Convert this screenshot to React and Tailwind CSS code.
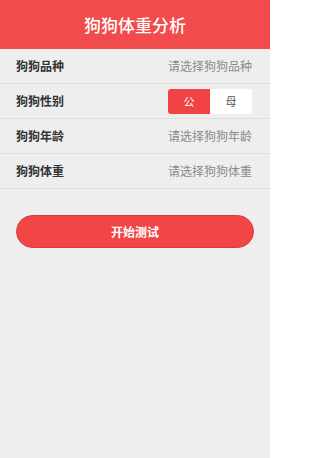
import React, { useState } from 'react';

const rows = [
  { label: '狗狗品种', hint: '请选择狗狗品种' },
  { label: '狗狗性别', toggle: true },
  { label: '狗狗年龄', hint: '请选择狗狗年龄' },
  { label: '狗狗体重', hint: '请选择狗狗体重' },
];

const App = () => {
  const [sex, setSex] = useState('公');

  return (
    <div className="w-[270px] h-[458px] bg-[#eeeeee] flex flex-col" style={{ fontFamily: '"Noto Sans CJK SC", "Noto Sans", sans-serif' }}>
      <div className="h-[49px] bg-[#f24b4b] flex items-center justify-center">
        <h1 className="text-white text-[17px] font-medium">狗狗体重分析</h1>
      </div>

      <div className="flex flex-col">
        {rows.map((row) => (
          <div key={row.label} className="h-[35px] flex items-center justify-between pl-4 pr-[18px] border-b border-[#dedede]">
            <span className="text-[12px] font-semibold text-[#333333]">{row.label}</span>
            {row.toggle ? (
              <div className="flex">
                {['公', '母'].map((s) => (
                  <button
                    key={s}
                    onClick={() => setSex(s)}
                    className={sex === s
                      ? 'w-[42px] h-[25px] text-[11px] bg-[#f04444] text-white rounded-l-[3px]'
                      : 'w-[42px] h-[25px] text-[11px] bg-white text-[#555555] rounded-r-[3px]'}
                  >
                    {s}
                  </button>
                ))}
              </div>
            ) : (
              <span className="text-[12px] text-[#8a8a8a]">{row.hint}</span>
            )}
          </div>
        ))}
      </div>

      <div className="px-4 pt-[26px]">
        <button className="w-full h-[33px] rounded-full bg-[#f24646] border border-[#d93a3a] text-white text-[12px] font-bold">
          开始测试
        </button>
      </div>
    </div>
  );
};

export default App;
